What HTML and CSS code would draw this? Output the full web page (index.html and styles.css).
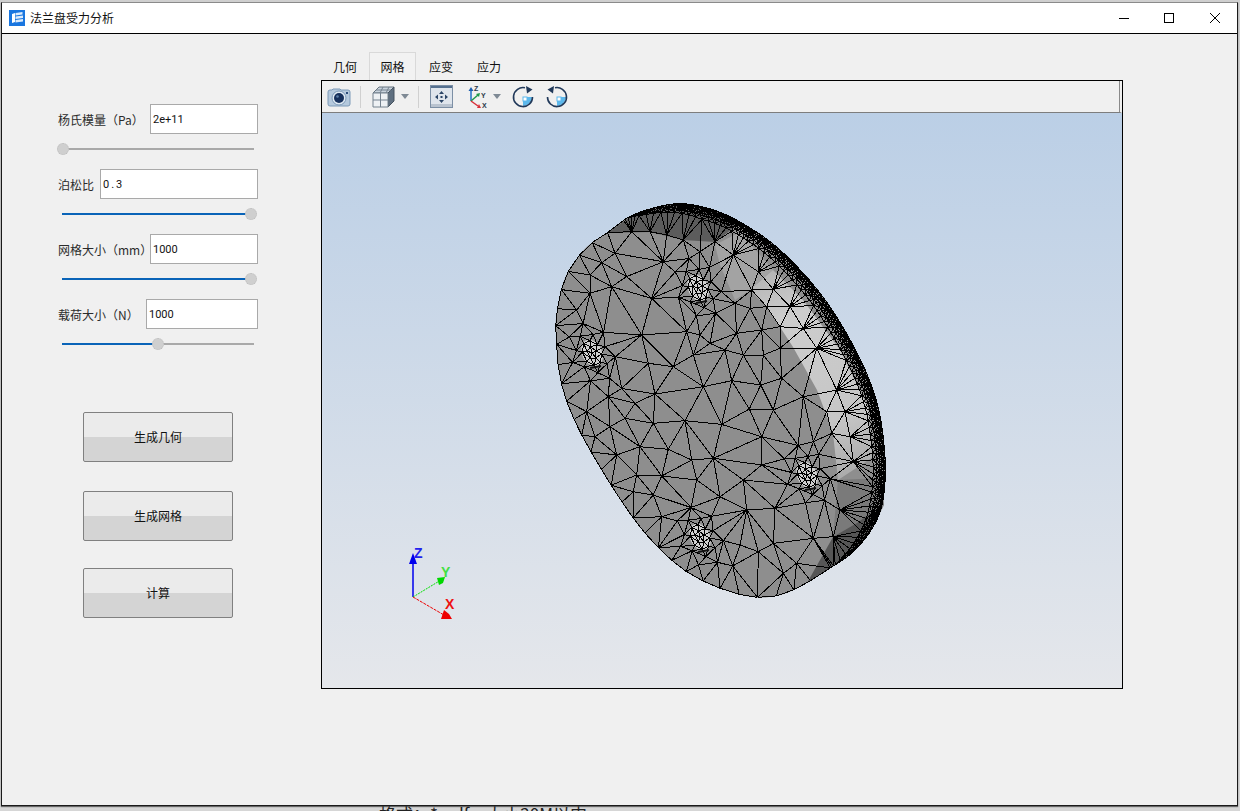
FILE: index.html
```html
<!DOCTYPE html>
<html lang="zh">
<head>
<meta charset="utf-8">
<title>法兰盘受力分析</title>
<link rel="stylesheet" href="styles.css">
</head>
<body>
<div class="desk">
  <div class="window">
    <header class="titlebar">
      <svg class="app-icon" viewBox="0 0 16 16">
        <rect width="16" height="16" fill="#1976e0"/>
        <path d="M3 4l3-1v9l-3 1z" fill="#fff"/>
        <path d="M6.5 3L13.5 2v2.5L6.5 5.500zM6.500 6.500L14 5.500V8L6.500 9zM6.500 10L14 9v2.500L6.500 12.500z" fill="#dcebfb"/>
      </svg>
      <span class="app-title">法兰盘受力分析</span>
      <div class="win-btns">
        <svg class="win-btn" viewBox="0 0 45 20"><path d="M17 10.500h10" stroke="#000" fill="none"/></svg>
        <svg class="win-btn" viewBox="0 0 45 20"><rect x="17.500" y="5.500" width="9" height="9" stroke="#000" fill="none"/></svg>
        <svg class="win-btn" viewBox="0 0 45 20"><path d="M18 5l10 10M28 5L18 15" stroke="#000" fill="none"/></svg>
      </div>
    </header>
    <main class="client">
      <section class="form">
        <div class="row"><span class="label w92">杨氏模量（Pa）</span><div class="input">2e+11</div></div>
        <div class="slider"><div class="fill" style="width:0%"></div><div class="handle" style="left:1px"></div></div>
        <div class="row"><span class="label w42">泊松比</span><div class="input wide">0.3</div></div>
        <div class="slider"><div class="fill" style="width:98%"></div><div class="handle" style="left:189px"></div></div>
        <div class="row"><span class="label w92">网格大小（mm）</span><div class="input">1000</div></div>
        <div class="slider"><div class="fill" style="width:98%"></div><div class="handle" style="left:189px"></div></div>
        <div class="row"><span class="label w88">载荷大小（N）</span><div class="input">1000</div></div>
        <div class="slider"><div class="fill" style="width:50%"></div><div class="handle" style="left:96px"></div></div>
        <button class="action first">生成几何</button>
        <button class="action second">生成网格</button>
        <button class="action third">计算</button>
      </section>
      <section class="views">
        <nav class="tabs">
          <span class="tab">几何</span>
          <span class="tab active">网格</span>
          <span class="tab">应变</span>
          <span class="tab">应力</span>
        </nav>
        <div class="frame">
          <div class="toolbar">
            <svg class="tool t-camera" viewBox="0 0 24 20">
              <path d="M6 2h7l1 1h7a2 2 0 0 1 2 2v12a2 2 0 0 1-2 2H3a2 2 0 0 1-2-2V5a2 2 0 0 1 2-2h2z" fill="#b5c9dd" stroke="#7d9ab8"/>
              <circle cx="12" cy="11" r="7" fill="#dfe9f3" stroke="#7d9ab8"/>
              <circle cx="12" cy="11" r="5" fill="#16305c"/>
              <circle cx="10.500" cy="9.500" r="1.300" fill="#5d7fa8"/>
              <rect x="19" y="5" width="2" height="2" fill="#2a4a78"/>
            </svg>
            <span class="sep s1"></span>
            <svg class="tool t-cube" viewBox="0 0 23 22">
              <path d="M1 7l6-6h15l-6 6z" fill="#c9d3dd" stroke="#64727f"/>
              <path d="M16 7l6-6v14l-6 6z" fill="#5f6f80" stroke="#46535f"/>
              <path d="M1 7h15v14H1z" fill="#eef1f4" stroke="#75828f"/>
              <path d="M8.500 7v14M1 14h15M4 4h15M11 1L8 7M17 1l-3 6" stroke="#75828f" fill="none"/>
            </svg>
            <svg class="tool t-drop d1" viewBox="0 0 8 5"><path d="M0 0h8L4 5z" fill="#7f8a95"/></svg>
            <span class="sep s2"></span>
            <svg class="tool t-fit" viewBox="0 0 23 23">
              <rect x="0.500" y="0.500" width="22" height="22" fill="#dfe5ec" stroke="#7c8fa5"/>
              <rect x="1" y="1" width="21" height="2" fill="#55708f"/>
              <rect x="1" y="19" width="21" height="3" fill="#b9c3cf"/>
              <path d="M11.500 6l2.500 3h-5zM11.500 18l2.500-3h-5zM5 12l3-2.500v5zM18 12l-3-2.500v5z" fill="#2b4567"/>
              <rect x="10.500" y="11" width="2" height="2" fill="#2b4567"/>
            </svg>
            <svg class="tool t-axes" viewBox="0 0 22 24">
              <path d="M4 16V5" stroke="#1d6fc4" stroke-width="1.500" fill="none"/>
              <path d="M4 2l2.500 4h-5z" fill="#1d5fb0"/>
              <path d="M4 16l7-6" stroke="#1e9a4a" stroke-width="1.500" fill="none"/>
              <path d="M13 8l-1 4-3-3z" fill="#1e9a4a"/>
              <path d="M4 16l7 5" stroke="#d8303a" stroke-width="1.500" fill="none"/>
              <path d="M14 23l-4 0 2-4z" fill="#d8303a"/>
              <text class="axis-txt" x="7" y="6">Z</text>
              <text class="axis-txt" x="14" y="13">Y</text>
              <text class="axis-txt" x="15" y="23">X</text>
            </svg>
            <svg class="tool t-drop d2" viewBox="0 0 8 5"><path d="M0 0h8L4 5z" fill="#7f8a95"/></svg>
            <svg class="tool t-rot r1" viewBox="0 0 22 22">
              <path d="M11 11h9a9.500 9.500 0 0 1-9 9z" fill="#5cb8ec"/>
              <rect x="11" y="11" width="4" height="4" fill="#fff" stroke="#5cb8ec"/>
              <path d="M13 1.800A9.500 9.500 0 1 0 20.500 11" stroke="#21395a" stroke-width="1.600" fill="none"/>
              <path d="M14 0l6.500 3.500L15 7.500z" fill="#21395a"/>
            </svg>
            <svg class="tool t-rot r2" viewBox="0 0 22 22">
              <path d="M11 11h9a9.500 9.500 0 0 1-9 9z" fill="#5cb8ec"/>
              <rect x="11" y="11" width="4" height="4" fill="#fff" stroke="#5cb8ec"/>
              <path d="M9 1.800A9.500 9.500 0 1 1 1.500 11" stroke="#21395a" stroke-width="1.600" fill="none"/>
              <path d="M8 0L1.500 3.500 7 7.500z" fill="#21395a"/>
            </svg>
          </div>
          <svg class="scene" viewBox="322 113 800 575">
            <defs>
              <linearGradient id="glow" gradientUnits="userSpaceOnUse" x1="770" y1="270" x2="870" y2="500">
                <stop offset="0" stop-color="#b5b5b5"/>
                <stop offset="0.2" stop-color="#cdcdcd"/>
                <stop offset="0.65" stop-color="#c6c6c6"/>
                <stop offset="1" stop-color="#9c9c9c"/>
              </linearGradient>
            </defs>
            <g id="shape">
              <path id="base" fill="#8e8e8e"/>
              <polygon fill="#a3a3a3" points="715,245 740,232 773,270 750,290 735,300 720,265"/>
              <polygon fill="url(#glow)" points="750,290 773,270 803,300 840,350 868,407 873,457 838,480 833,433 817,390 793,347 780,327 767,307"/>
              <polygon fill="#7a7a7a" points="838,480 882,478 884,505 873,527 833,537"/>
              <polygon fill="#5c5c5c" points="607,233 633,215 673,204 713,210 740,223 715,242 683,240 650,232"/>
              <polygon fill="#565656" points="807,583 833,537 857,523 882,505 873,527 853,552 827,570"/>
              <g id="holes"></g>
              <path id="mesh" fill="none" stroke="#000" stroke-width="1" shape-rendering="crispEdges"/>
              <g id="caps"></g>
            </g>
            <g class="triad">
              <path d="M413 597V562" stroke="#0000ee" stroke-width="1.500" fill="none"/>
              <path d="M413 553l4 11h-8z" fill="#0000ee"/>
              <text class="triad-txt" x="414" y="558" fill="#2222ee">Z</text>
              <path d="M413 597l28-17" stroke="#00e000" stroke-dasharray="2 1" fill="none"/>
              <path d="M437 578l8-1-2 6-4 2z" fill="#00d800"/>
              <text class="triad-txt" x="441" y="577" fill="#44e044">Y</text>
              <path d="M413 597l31 18" stroke="#ee0000" stroke-dasharray="3 1" fill="none"/>
              <path d="M444 610l5 4 3 5h-11z" fill="#ee0000"/>
              <text class="triad-txt" x="445" y="609" fill="#ee1111">X</text>
            </g>
          </svg>
        </div>
      </section>
    </main>
  </div>
  <p class="behind">格式：*.pdf，大小20M以内</p>
</div>
<script src="mesh.js"></script>
</body>
</html>
```
FILE: styles.css
```css
* { box-sizing: border-box; }
html, body { margin: 0; height: 100%; overflow: hidden; }
body { background: #d2d2d2; font-family: "Noto Sans CJK SC", "Liberation Sans", sans-serif; font-size: 12px; color: #222; }
.desk { height: 811px; padding: 2px 2px 0 1px; overflow: hidden; background: linear-gradient(#cfcfcf, #d6d6d6); }
.window { height: 804px; display: flex; flex-direction: column; border: 1px solid #1a1a1a; border-top: 1px solid #8a8a8a; background: #f0f0f0; box-shadow: 0 1px 1px #666; }
.titlebar { height: 31px; flex: none; display: flex; align-items: center; background: #fff; border-bottom: 1px solid #000; padding-left: 7px; }
.app-icon { width: 16px; height: 16px; flex: none; }
.app-title { margin-left: 5px; color: #111; line-height: 16px; }
.win-btns { margin-left: auto; display: flex; }
.win-btn { width: 45px; height: 20px; display: block; }
.client { flex: 1; display: flex; background: #f0f0f0; min-height: 0; }
.form { width: 319px; flex: none; padding: 70px 0 0 56px; display: flex; flex-direction: column; align-items: flex-start; }
.row { width: 200px; height: 30px; display: flex; align-items: center; }
.label { flex: none; white-space: nowrap; color: #2b2b2b; line-height: 18px; padding-top: 1px; }
.w92 { width: 92px; }
.w42 { width: 42px; }
.w88 { width: 88px; }
.input { flex: 1; height: 30px; background: #fff; border: 1px solid #a9a9a9; padding-left: 2px; line-height: 29px; font-family: Roboto, "Liberation Sans", sans-serif; font-size: 11px; color: #111; }
.wide { letter-spacing: 2px; }
.slider { position: relative; width: 192px; height: 2px; margin: 14px 0 19px 4px; background: #a9a9a9; }
.fill { height: 2px; background: #0a64b8; }
.handle { position: absolute; top: -5px; width: 12px; height: 12px; margin-left: -6px; border-radius: 50%; background: #cfcfcf; border: 1px dotted #bdbdbd; }
.action { width: 150px; height: 50px; flex: none; margin-left: 25px; border: 1px solid #808080; border-radius: 2px; background: linear-gradient(#ebebeb 50%, #d4d4d4 50%); font: inherit; color: #111; padding: 0 0 1px; }
.first { margin-top: 48px; }
.second { margin-top: 29px; }
.third { margin-top: 27px; }
.views { width: 802px; flex: none; padding-top: 18px; }
.tabs { height: 28px; display: flex; }
.tab { width: 48px; height: 28px; text-align: center; line-height: 29px; color: #111; }
.tab.active { width: 47px; border: 1px solid #d9d9d9; border-bottom: none; background: #f2f2f2; line-height: 27px; }
.active ~ .tab { padding-left: 2px; }
.frame { height: 609px; border: 1px solid #000; display: flex; flex-direction: column; }
.toolbar { height: 32px; flex: none; display: flex; align-items: center; background: #f0f0f0; border-bottom: 1px solid #7d7d7d; border-right: 2px solid #f0f0f0; box-shadow: inset -1px 0 0 #8a8a8a; }
.tool { display: block; flex: none; }
.t-camera { width: 24px; height: 20px; margin-left: 5px; }
.sep { width: 1px; height: 22px; background: #d0d0d0; flex: none; }
.s1 { margin-left: 9px; }
.t-cube { width: 23px; height: 22px; margin-left: 11px; }
.t-drop { width: 8px; height: 5px; }
.d1 { margin-left: 6px; }
.s2 { margin-left: 9px; }
.t-fit { width: 23px; height: 23px; margin-left: 11px; }
.t-axes { width: 22px; height: 24px; margin-left: 14px; }
.d2 { margin-left: 4px; }
.t-rot { width: 22px; height: 22px; }
.r1 { margin-left: 11px; }
.r2 { margin-left: 12px; }
.axis-txt { font-family: "Liberation Sans", sans-serif; font-size: 7px; font-weight: bold; fill: #2a3a4a; }
.scene { flex: 1; display: block; width: 800px; height: 575px; background: linear-gradient(#bbcfe6, #e5e7eb); }
.triad-txt { font-family: "Liberation Sans", sans-serif; font-size: 14px; font-weight: bold; }
.behind { margin: 0; padding-left: 378px; font-size: 17px; line-height: 16px; color: #222; white-space: nowrap; }
```
FILE: mesh.js
```js
(function () {
  var NS = "http://www.w3.org/2000/svg";
  var outline = [[593,242],[582,252],[565,278],[557,312],[556,333],[560,377],[573,417],[600,467],[640,527],[680,567],[717,587],[753,597],[780,595],[803,585],[827,570],[853,552],[873,527],[883,500],[885,457],[877,403],[857,353],[823,297],[780,250],[740,222],[707,208],[673,204],[633,215],[607,233]];
  var holes = [[592,353],[698,288],[807,475],[700,537]];
  var interior = [[335,325],[305,435],[400,530],[345,612],[435,692],[340,700],[255,685],[300,770],[385,778],[455,810],[520,805],[545,703],[490,590],[575,572],[628,657],[662,585],[610,870],[700,660],[665,740],[725,565],[790,620],[860,665],[875,730],[820,755],[670,495],[610,495],[555,480],[460,495],[440,425],[510,460],[590,430],[665,420],[720,475],[790,415],[830,475],[885,490],[905,555],[890,600],[915,665],[930,740],[940,815],[895,870],[830,830],[665,825],[705,955],[795,970],[820,1045],[730,1150],[655,1085],[600,1065],[578,1128],[525,1040],[365,858],[340,915],[290,855],[230,795],[185,810],[165,740],[210,710],[140,665],[130,590],[205,620],[285,640],[245,595],[270,578],[325,520],[240,480],[195,500],[90,515],[110,360],[150,310],[215,290],[260,260],[225,190],[185,218],[150,255],[105,220],[280,240],[370,215],[430,150],[480,185],[520,210],[580,195],[655,245],[635,300],[700,298],[750,350],[680,350],[720,410],[630,355],[585,340],[555,370],[520,350],[480,435],[440,365],[390,340],[395,290],[470,240],[525,155],[280,905],[240,940],[280,1000],[365,980],[460,1095],[520,1110],[430,1130],[330,125],[275,125],[230,130],[380,135],[620,960],[540,920],[470,870],[900,960],[960,900],[880,1040],[700,1060],[770,1120]];

  // Closed Catmull-Rom resampled at 1px
  function curve(pts) {
    var out = [], n = pts.length;
    for (var i = 0; i < n; i++) {
      var p0 = pts[(i + n - 1) % n], p1 = pts[i], p2 = pts[(i + 1) % n], p3 = pts[(i + 2) % n];
      var len = Math.hypot(p2[0] - p1[0], p2[1] - p1[1]);
      var steps = Math.max(2, Math.round(len));
      for (var k = 0; k < steps; k++) {
        var t = k / steps, t2 = t * t, t3 = t2 * t;
        out.push([
          0.5 * (2 * p1[0] + (p2[0] - p0[0]) * t + (2 * p0[0] - 5 * p1[0] + 4 * p2[0] - p3[0]) * t2 + (3 * p1[0] - p0[0] - 3 * p2[0] + p3[0]) * t3),
          0.5 * (2 * p1[1] + (p2[1] - p0[1]) * t + (2 * p0[1] - 5 * p1[1] + 4 * p2[1] - p3[1]) * t2 + (3 * p1[1] - p0[1] - 3 * p2[1] + p3[1]) * t3)
        ]);
      }
    }
    return out;
  }
  var edge = curve(outline);
  document.getElementById("base").setAttribute("d", "M" + edge.map(function (p) { return p[0].toFixed(1) + " " + p[1].toFixed(1); }).join("L") + "Z");

  function inside(x, y) {
    var hit = false;
    for (var i = 0, j = edge.length - 1; i < edge.length; j = i++) {
      var A = edge[i], B = edge[j];
      if ((A[1] > y) !== (B[1] > y) && x < (B[0] - A[0]) * (y - A[1]) / (B[1] - A[1]) + A[0]) hit = !hit;
    }
    return hit;
  }
  function edgeDist(x, y) {
    var d = 1e9;
    edge.forEach(function (p) { var q = Math.hypot(p[0] - x, p[1] - y); if (q < d) d = q; });
    return d;
  }
  function nearest(x, y) {
    var b = 0, d = 1e9;
    edge.forEach(function (p, i) { var q = Math.hypot(p[0] - x, p[1] - y); if (q < d) { d = q; b = i; } });
    return b;
  }
  var a0 = nearest(830, 568), a1 = nearest(622, 222);
  var P = [];
  function add(x, y, min) {
    for (var i = 0; i < P.length; i++) {
      var dx = P[i][0] - x, dy = P[i][1] - y;
      if (dx * dx + dy * dy < min * min) return;
    }
    P.push([x, y]);
  }
  // Rim rows: depth, spacing
  var rows = [[0, 2.2], [2, 2.4], [4, 2.8], [6.2, 3.4], [9, 4.6], [13, 7]];
  rows.forEach(function (r) {
    for (var i = a0; i < a1; i += r[1]) {
      var idx = Math.floor(i), p = edge[idx];
      var u = (i - a0) / (a1 - a0);
      var w = Math.min(1, Math.sin(Math.PI * u) * 2.2);
      var cx = 715 - p[0], cy = 410 - p[1], l = Math.hypot(cx, cy);
      add(p[0] + cx / l * r[0] * w, p[1] + cy / l * r[0] * w, 1.5);
    }
  });
  // Plain boundary
  for (var i = a1; i < edge.length + a0; i += 19) {
    var p = edge[Math.floor(i) % edge.length];
    add(p[0], p[1], 6);
  }
  // Holes
  var rot = -0.45, c = Math.cos(rot), s = Math.sin(rot);
  var rings = [[0.5, 5], [1, 8], [1.6, 7], [2.4, 7]];
  holes.forEach(function (h) {
    add(h[0], h[1], 1);
    rings.forEach(function (r, j) {
      for (var k = 0; k < r[1]; k++) {
        var t = (k + j * 0.5) / r[1] * Math.PI * 2;
        var ex = 9 * r[0] * Math.cos(t), ey = 13 * r[0] * Math.sin(t);
        add(h[0] + ex * c - ey * s, h[1] + ex * s + ey * c, 3);
      }
    });
  });
  // Interior vertices, read from the picture
  interior.forEach(function (z) {
    var x = z[0] / 3 + 540, y = z[1] / 3 + 190;
    if (inside(x, y) && edgeDist(x, y) > 10) add(x, y, 12);
  });

  // Bowyer-Watson
  function circum(a, b, c) {
    var A = P[a], B = P[b], C = P[c];
    var d = 2 * (A[0] * (B[1] - C[1]) + B[0] * (C[1] - A[1]) + C[0] * (A[1] - B[1]));
    var a2 = A[0] * A[0] + A[1] * A[1], b2 = B[0] * B[0] + B[1] * B[1], c2 = C[0] * C[0] + C[1] * C[1];
    var x = (a2 * (B[1] - C[1]) + b2 * (C[1] - A[1]) + c2 * (A[1] - B[1])) / d;
    var y = (a2 * (C[0] - B[0]) + b2 * (A[0] - C[0]) + c2 * (B[0] - A[0])) / d;
    return { a: a, b: b, c: c, x: x, y: y, r: (A[0] - x) * (A[0] - x) + (A[1] - y) * (A[1] - y) };
  }
  P = P.map(function (p, i) { return [p[0] + ((i * 7919) % 13 - 6) * 0.004, p[1] + ((i * 104729) % 11 - 5) * 0.004]; });
  var n = P.length;
  P.push([-5000, -5000], [7000, -5000], [700, 8000]);
  var tris = [circum(n, n + 1, n + 2)];
  for (var v = 0; v < n; v++) {
    var keep = [], hole = {};
    tris.forEach(function (t) {
      var dx = P[v][0] - t.x, dy = P[v][1] - t.y;
      if (dx * dx + dy * dy < t.r) {
        [[t.a, t.b], [t.b, t.c], [t.c, t.a]].forEach(function (e) {
          var key = Math.min(e[0], e[1]) + "_" + Math.max(e[0], e[1]);
          hole[key] = (hole[key] || 0) + 1;
        });
      } else keep.push(t);
    });
    Object.keys(hole).forEach(function (key) {
      if (hole[key] === 1) {
        var ab = key.split("_");
        keep.push(circum(+ab[0], +ab[1], v));
      }
    });
    tris = keep;
  }
  var seen = {}, d = "";
  tris.forEach(function (t) {
    if (t.a >= n || t.b >= n || t.c >= n) return;
    var gx = (P[t.a][0] + P[t.b][0] + P[t.c][0]) / 3, gy = (P[t.a][1] + P[t.b][1] + P[t.c][1]) / 3;
    if (!inside(gx, gy)) return;
    [[t.a, t.b], [t.b, t.c], [t.c, t.a]].forEach(function (e) {
      var key = Math.min(e[0], e[1]) + "_" + Math.max(e[0], e[1]);
      if (seen[key]) return;
      seen[key] = 1;
      d += "M" + P[e[0]][0].toFixed(1) + " " + P[e[0]][1].toFixed(1) + "L" + P[e[1]][0].toFixed(1) + " " + P[e[1]][1].toFixed(1);
    });
  });
  document.getElementById("mesh").setAttribute("d", d);

  var hg = document.getElementById("holes"), cg = document.getElementById("caps");
  holes.forEach(function (h) {
    var el = document.createElementNS(NS, "ellipse");
    el.setAttribute("cx", h[0]); el.setAttribute("cy", h[1]);
    el.setAttribute("rx", 10); el.setAttribute("ry", 14);
    el.setAttribute("fill", "#cfcfcf");
    el.setAttribute("transform", "rotate(-26 " + h[0] + " " + h[1] + ")");
    hg.appendChild(el);
    var cap = document.createElementNS(NS, "path");
    cap.setAttribute("d", "M" + (h[0] - 2) + " " + (h[1] + 15) + "l11 -2");
    cap.setAttribute("stroke", "#111"); cap.setAttribute("stroke-width", "2"); cap.setAttribute("fill", "none");
    cg.appendChild(cap);
  });
})();
```
